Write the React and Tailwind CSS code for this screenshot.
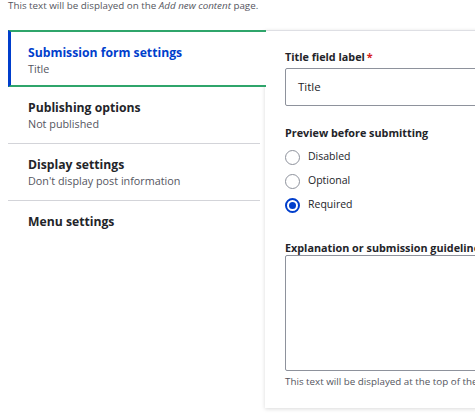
import React from 'react';

const font = {fontFamily: '"Open Sans", "Noto Sans", Arial, sans-serif'};

const tabs = [
    {title: 'Publishing options', summary: 'Not published'},
    {title: 'Display settings', summary: "Don't display post information"},
    {title: 'Menu settings', summary: ''},
];

const Radio = ({label, checked}) => (
    <label className="flex items-center gap-[8px] h-6">
        {checked ? (
            <span className="w-[15px] h-[15px] rounded-full border-2 border-[#003ecc] flex items-center justify-center">
                <span className="w-[7px] h-[7px] rounded-full bg-[#003ecc]"/>
            </span>
        ) : (
            <span className="w-[15px] h-[15px] rounded-full border border-[#8e929c] bg-white"/>
        )}
        <span className="text-[10.5px] text-[#232429]">{label}</span>
    </label>
);

const App = () => {
    return (
        <div className="w-[475px] h-[419px] bg-white overflow-hidden" style={font}>
            <p className="pl-2 pt-[0px] text-[9.8px] leading-[12px] text-[#545560] whitespace-nowrap">
                This text will be displayed on the <em>Add new content</em> page.
            </p>

            <div className="flex mt-[18px] pl-2">
                {/* tabs menu */}
                <div className="w-[257px] shrink-0">
                    <div className="relative z-10 bg-white border-l-[3px] border-[#003ecc] border-t-2 border-b-2 border-t-[#2fa56b] border-b-[#2fa56b] pl-[17px] pt-3 pb-2 -mr-[1px]">
                        <div className="text-[12.2px] leading-[17px] font-bold text-[#003ecc]">Submission form settings</div>
                        <div className="text-[10.8px] leading-4 text-[#545560]">Title</div>
                    </div>
                    {tabs.map((tab, i) => (
                        <div key={tab.title} className={"pl-5 pt-3 pb-[11px] mr-[5px] " + (i < tabs.length - 1 ? 'border-b border-[#d3d4d9]' : '')}>
                            <div className="text-[12.2px] leading-[17px] font-bold text-[#232429]">{tab.title}</div>
                            {tab.summary && (
                                <div className="text-[10.8px] leading-4 text-[#545560]">{tab.summary}</div>
                            )}
                        </div>
                    ))}
                </div>

                {/* pane */}
                <div className="w-[400px] shrink-0 h-[378px] bg-white border-t border-[#dedfe4] shadow-[0_1px_4px_rgba(0,0,0,0.15)] pl-5 pt-[18px]">
                    <div className="text-[10.8px] leading-4 font-bold text-[#232429] mb-[3px]">
                        Title field label<span className="text-[#d72222] ml-[2px]">*</span>
                    </div>
                    <div className="h-[38px] border border-[#8e929c] rounded-[2px] flex items-center pl-[12px] text-[11.5px] text-[#232429]">
                        Title
                    </div>

                    <div className="mt-[19px] text-[10.8px] leading-4 font-bold text-[#232429]">Preview before submitting</div>
                    <div className="mt-[4px] flex flex-col">
                        <Radio label="Disabled"/>
                        <Radio label="Optional"/>
                        <Radio label="Required" checked/>
                    </div>

                    <div className="mt-[23px] text-[10.8px] leading-4 font-bold text-[#232429] whitespace-nowrap">
                        Explanation or submission guidelines
                    </div>
                    <div className="-mt-[1px] h-[116px] border border-[#8e929c] rounded-[2px]"/>
                    <p className="mt-[4px] text-[9.8px] leading-[14px] text-[#545560] whitespace-nowrap">
                        This text will be displayed at the top of the page when creating or editing content of this type.
                    </p>
                </div>
            </div>
        </div>
    );
};

export default App;
